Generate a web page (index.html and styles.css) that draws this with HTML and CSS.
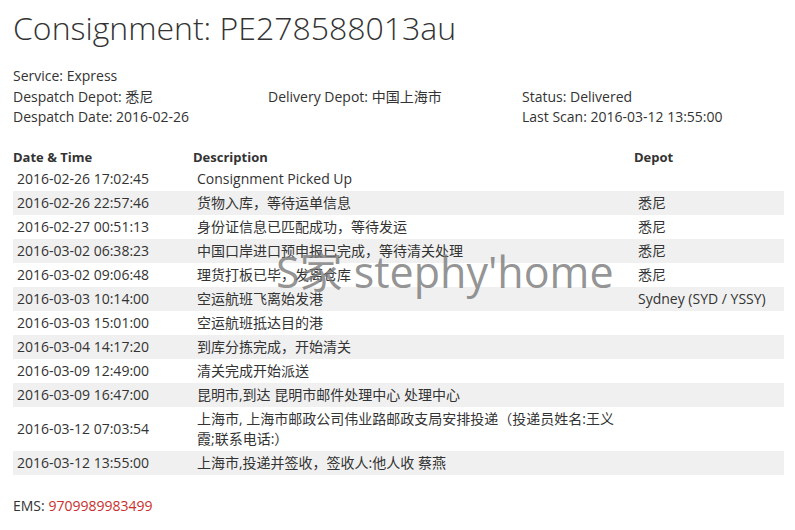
FILE: index.html
```html
<!DOCTYPE html>
<html lang="en">
<head>
    <meta charset="UTF-8">
    <title>Consignment PE278588013au</title>
    <link rel="stylesheet" href="styles.css">
</head>
<body>
    <div class="page">
        <h1>Consignment: PE278588013au</h1>

        <div class="info">
            <div class="info-row">
                <span>Service: Express</span>
            </div>
            <div class="info-row">
                <span>Despatch Depot: 悉尼</span>
                <span>Delivery Depot: 中国上海市</span>
                <span>Status: Delivered</span>
            </div>
            <div class="info-row">
                <span>Despatch Date: 2016-02-26</span>
                <span></span>
                <span>Last Scan: 2016-03-12 13:55:00</span>
            </div>
        </div>

        <table class="events">
            <thead>
                <tr>
                    <th class="col-date">Date &amp; Time</th>
                    <th class="col-desc">Description</th>
                    <th class="col-depot">Depot</th>
                </tr>
            </thead>
            <tbody>
                <tr><td>2016-02-26 17:02:45</td><td>Consignment Picked Up</td><td></td></tr>
                <tr><td>2016-02-26 22:57:46</td><td>货物入库，等待运单信息</td><td>悉尼</td></tr>
                <tr><td>2016-02-27 00:51:13</td><td>身份证信息已匹配成功，等待发运</td><td>悉尼</td></tr>
                <tr><td>2016-03-02 06:38:23</td><td>中国口岸进口预申报已完成，等待清关处理</td><td>悉尼</td></tr>
                <tr><td>2016-03-02 09:06:48</td><td>理货打板已毕，发离仓库</td><td>悉尼</td></tr>
                <tr><td>2016-03-03 10:14:00</td><td>空运航班飞离始发港</td><td>Sydney (SYD / YSSY)</td></tr>
                <tr><td>2016-03-03 15:01:00</td><td>空运航班抵达目的港</td><td></td></tr>
                <tr><td>2016-03-04 14:17:20</td><td>到库分拣完成，开始清关</td><td></td></tr>
                <tr><td>2016-03-09 12:49:00</td><td>清关完成开始派送</td><td></td></tr>
                <tr><td>2016-03-09 16:47:00</td><td>昆明市,到达 昆明市邮件处理中心 处理中心</td><td></td></tr>
                <tr><td>2016-03-12 07:03:54</td><td>上海市, 上海市邮政公司伟业路邮政支局安排投递（投递员姓名:王义霞;联系电话:）</td><td></td></tr>
                <tr><td>2016-03-12 13:55:00</td><td>上海市,投递并签收，签收人:他人收 蔡燕</td><td></td></tr>
            </tbody>
        </table>

        <p class="ems">EMS: <span class="ems-no">9709989983499</span></p>

        <div class="watermark">S家 stephy'home</div>
    </div>
</body>
</html>
```

FILE: styles.css
```css
* { margin: 0; padding: 0; box-sizing: border-box; }
body { font-family: "Open Sans", "Noto Sans CJK SC", sans-serif; font-size: 14px; color: #333; background: #fff; }
.page { position: relative; padding: 8px 11px 0 13px; }
h1 { font-size: 32px; font-weight: 300; line-height: 40px; color: #333; }
.info { margin-top: 18px; line-height: 20.5px; }
.info-row { display: grid; grid-template-columns: 255px 254px 1fr; }
.events { width: 771px; border-collapse: collapse; margin-top: 18px; }
.events th { text-align: left; font-size: 13px; font-weight: 700; padding: 3px 0 1px; line-height: 17px; }
.col-date { width: 180px; }
.col-desc { width: 441px; }
.events td { padding: 2px 4px; line-height: 20px; vertical-align: middle; }
.events tbody tr:nth-child(even) { background: #f0f0f0; }
.ems { margin-top: 21px; line-height: 20px; }
.ems-no { color: #c9302c; }
.watermark { position: absolute; left: 276px; top: 247px; font-size: 43px; line-height: 50px; color: rgba(120, 120, 120, 0.8); white-space: nowrap; pointer-events: none; }
```
